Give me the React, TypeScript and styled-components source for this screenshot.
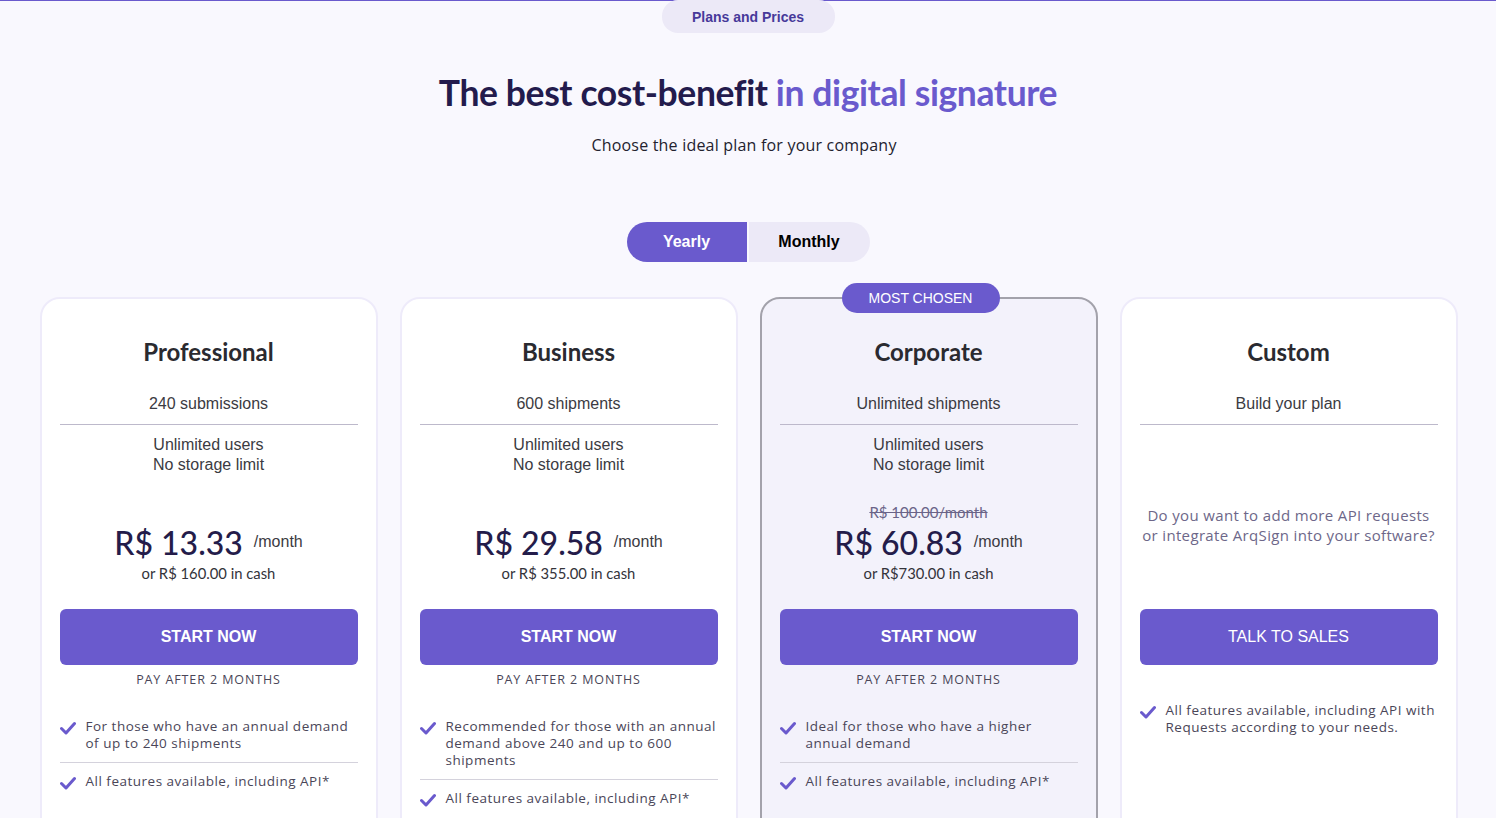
import React from "react";
import styled, { createGlobalStyle, css } from "styled-components";

const GlobalStyle = createGlobalStyle`
  html, body { margin: 0; padding: 0; }
  body {
    background: #f9f8fe;
    font-family: "Liberation Sans", Arial, sans-serif;
    overflow: hidden;
  }
`;

const PURPLE = "#6a5acd";
const MUTED = "'Open Sans', 'Noto Sans', sans-serif";

const Page = styled.div`
  border-top: 1px solid ${PURPLE};
  min-height: 817px;
  display: flex;
  flex-direction: column;
  align-items: center;
`;

const Tag = styled.div`
  margin-top: -1px;
  width: 173px;
  height: 33px;
  border-radius: 16px;
  background: #ece9f7;
  color: #47399a;
  font-family: "Liberation Sans", Arial, sans-serif;
  font-weight: 700;
  font-size: 14px;
  display: flex;
  align-items: center;
  justify-content: center;
`;

const Heading = styled.h1`
  margin: 38px 0 0;
  font-family: Lato, sans-serif;
  font-weight: 700;
  font-size: 35.5px;
  line-height: 44px;
  color: #231b4d;
  letter-spacing: -0.4px;
`;

const Accent = styled.span`
  color: ${PURPLE};
`;

const Sub = styled.p`
  margin: 19px 0 0 -8px;
  font-family: ${MUTED};
  font-size: 16px;
  line-height: 22px;
  letter-spacing: 0.2px;
  color: #23222e;
`;

const Toggle = styled.div`
  margin-top: 66px;
  display: flex;
  gap: 2px;
`;

const ToggleBtn = styled.button<{ $active?: boolean; $side: "left" | "right" }>`
  width: ${(p) => (p.$side === "left" ? 120 : 121)}px;
  height: 40px;
  border: none;
  font-family: "Liberation Sans", Arial, sans-serif;
  font-weight: 700;
  font-size: 16px;
  cursor: pointer;
  background: ${(p) => (p.$active ? PURPLE : "#ece9f7")};
  color: ${(p) => (p.$active ? "#fff" : "#000")};
  border-radius: ${(p) => (p.$side === "left" ? "20px 0 0 20px" : "0 20px 20px 0")};
`;

const Grid = styled.div`
  margin-top: 35px;
  display: grid;
  grid-template-columns: repeat(4, 338px);
  gap: 22px;
  margin-left: 1px;
`;

const Card = styled.div<{ $featured?: boolean }>`
  position: relative;
  box-sizing: border-box;
  height: 560px;
  border-radius: 20px;
  padding: 38px 18px 0;
  display: flex;
  flex-direction: column;
  text-align: center;
  background: ${(p) => (p.$featured ? "#f3f2fb" : "#ffffff")};
  border: 2px solid ${(p) => (p.$featured ? "#a3a2ab" : "#eeebfa")};
`;

const Badge = styled.div`
  position: absolute;
  top: -16px;
  left: 80px;
  width: 158px;
  height: 30px;
  border-radius: 15px;
  background: ${PURPLE};
  color: #fff;
  font-family: "Liberation Sans", Arial, sans-serif;
  font-size: 14px;
  display: flex;
  align-items: center;
  justify-content: center;
`;

const Title = styled.h2`
  margin: 0;
  font-family: Lato, sans-serif;
  font-weight: 700;
  font-size: 24px;
  line-height: 30px;
  color: #2a2a30;
`;

const Quota = styled.div`
  margin-top: 27px;
  padding-bottom: 10px;
  border-bottom: 1px solid #bdb9cb;
  font-size: 16px;
  line-height: 20px;
  color: #3b3b42;
`;

const Middle = styled.div<{ $custom?: boolean }>`
  height: 184px;
  box-sizing: border-box;
  display: flex;
  flex-direction: column;
  justify-content: space-between;
  padding: 10px 0 26px;
  ${(p) =>
    p.$custom &&
    css`
      justify-content: flex-start;
      padding-top: 80px;
    `}
`;

const Details = styled.div`
  font-size: 16px;
  line-height: 20px;
  color: #3b3b42;
`;

const Question = styled.div`
  font-family: ${MUTED};
  font-size: 15px;
  line-height: 20px;
  letter-spacing: 0.35px;
  color: #6d6789;
`;

const PriceBlock = styled.div`
  display: flex;
  flex-direction: column;
  align-items: center;
`;

const OldPrice = styled.div`
  font-family: Lato, sans-serif;
  font-size: 15px;
  line-height: 20px;
  color: #6a6488;
  text-decoration: line-through;
`;

const PriceRow = styled.div`
  display: flex;
  align-items: center;
  gap: 11px;
  height: 40px;
  margin-bottom: 1px;
`;

const Price = styled.span`
  font-family: Lato, sans-serif;
  font-weight: 500;
  font-size: 32px;
  color: #241c4a;
`;

const Per = styled.span`
  font-size: 16px;
  color: #3b3b42;
`;

const Cash = styled.div`
  font-family: Lato, sans-serif;
  font-size: 14.8px;
  line-height: 20px;
  color: #33333a;
`;

const CTA = styled.button<{ $bold?: boolean }>`
  width: 100%;
  height: 56px;
  border: none;
  border-radius: 6px;
  background: ${PURPLE};
  color: #fff;
  font-family: "Liberation Sans", Arial, sans-serif;
  font-size: 16px;
  font-weight: ${(p) => (p.$bold ? 700 : 400)};
  cursor: pointer;
`;

const PayAfter = styled.div`
  margin-top: 6px;
  font-family: ${MUTED};
  font-size: 12.5px;
  line-height: 18px;
  letter-spacing: 0.9px;
  color: #4a4658;
`;

const Features = styled.ul<{ $offset: number }>`
  list-style: none;
  margin: ${(p) => p.$offset}px 0 0;
  padding: 0;
  text-align: left;
`;

const Feature = styled.li`
  display: flex;
  gap: 10px;
  padding: 10px 0;
  font-family: ${MUTED};
  font-size: 13.5px;
  line-height: 17px;
  letter-spacing: 0.5px;
  color: #4a4658;
  & + & {
    border-top: 1px solid #d4d2dc;
  }
`;

const CheckIcon = styled.svg`
  flex: 0 0 16px;
  width: 16px;
  height: 14px;
  margin-top: 3px;
`;

const Check = () => (
  <CheckIcon viewBox="0 0 16 14">
    <path d="M1.5 7.5 L6 12 L14.5 2.5" fill="none" stroke={PURPLE} strokeWidth="3" strokeLinecap="round" strokeLinejoin="round" />
  </CheckIcon>
);

type Plan = {
  name: string;
  quota: string;
  price?: string;
  old?: string;
  cash?: string;
  features: string[];
  featured?: boolean;
};

const plans: Plan[] = [
  {
    name: "Professional",
    quota: "240 submissions",
    price: "R$ 13.33",
    cash: "or R$ 160.00 in cash",
    features: ["For those who have an annual demand of up to 240 shipments", "All features available, including API*"],
  },
  {
    name: "Business",
    quota: "600 shipments",
    price: "R$ 29.58",
    cash: "or R$ 355.00 in cash",
    features: ["Recommended for those with an annual demand above 240 and up to 600 shipments", "All features available, including API*"],
  },
  {
    name: "Corporate",
    quota: "Unlimited shipments",
    price: "R$ 60.83",
    old: "R$ 100.00/month",
    cash: "or R$730.00 in cash",
    featured: true,
    features: ["Ideal for those who have a higher annual demand", "All features available, including API*"],
  },
];

export default function App() {
  return (
    <>
      <GlobalStyle />
      <Page>
        <Tag>Plans and Prices</Tag>
        <Heading>
          The best cost-benefit <Accent>in digital signature</Accent>
        </Heading>
        <Sub>Choose the ideal plan for your company</Sub>
        <Toggle>
          <ToggleBtn $active $side="left">Yearly</ToggleBtn>
          <ToggleBtn $side="right">Monthly</ToggleBtn>
        </Toggle>
        <Grid>
          {plans.map((p) => (
            <Card key={p.name} $featured={p.featured}>
              {p.featured && <Badge>MOST CHOSEN</Badge>}
              <Title>{p.name}</Title>
              <Quota>{p.quota}</Quota>
              <Middle>
                <Details>
                  Unlimited users
                  <br />
                  No storage limit
                </Details>
                <PriceBlock>
                  {p.old && <OldPrice>{p.old}</OldPrice>}
                  <PriceRow>
                    <Price>{p.price}</Price>
                    <Per>/month</Per>
                  </PriceRow>
                  <Cash>{p.cash}</Cash>
                </PriceBlock>
              </Middle>
              <CTA $bold>START NOW</CTA>
              <PayAfter>PAY AFTER 2 MONTHS</PayAfter>
              <Features $offset={19}>
                {p.features.map((f) => (
                  <Feature key={f}>
                    <Check />
                    <span>{f}</span>
                  </Feature>
                ))}
              </Features>
            </Card>
          ))}
          <Card>
            <Title>Custom</Title>
            <Quota>Build your plan</Quota>
            <Middle $custom>
              <Question>
                Do you want to add more API requests or integrate ArqSign into your software?
              </Question>
            </Middle>
            <CTA>TALK TO SALES</CTA>
            <Features $offset={27}>
              <Feature>
                <Check />
                <span>All features available, including API with Requests according to your needs.</span>
              </Feature>
            </Features>
          </Card>
        </Grid>
      </Page>
    </>
  );
}
